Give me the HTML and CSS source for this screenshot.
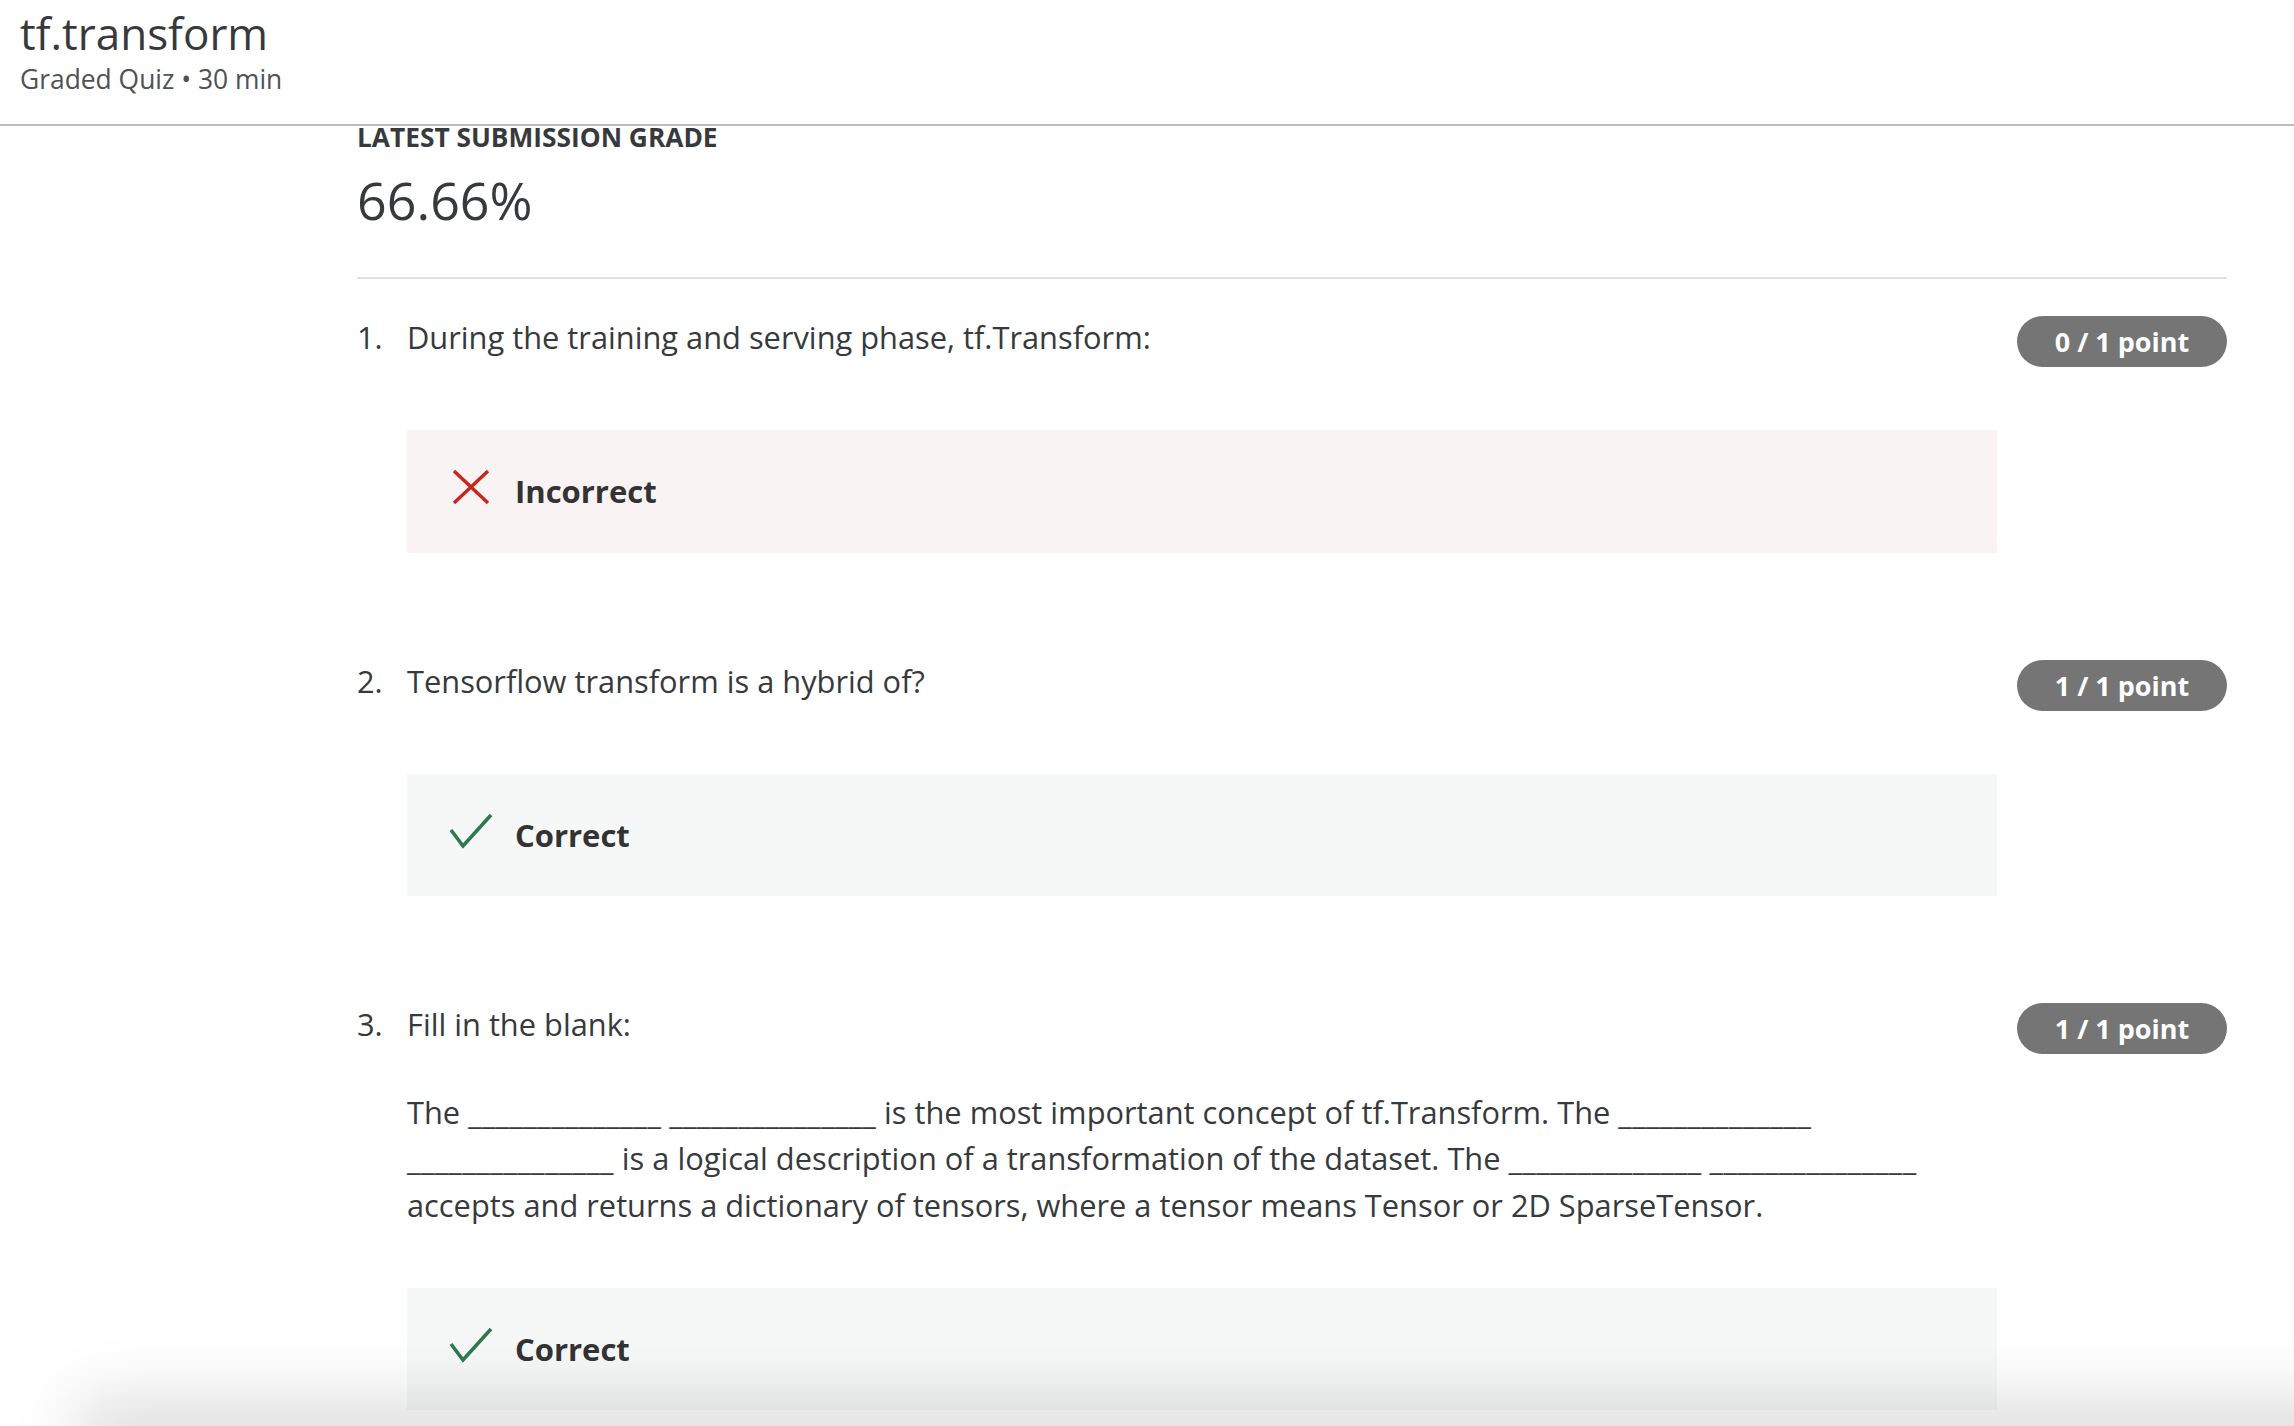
FILE: index.html
```html
<!DOCTYPE html>
<html lang="en">
<head>
<meta charset="utf-8">
<title>tf.transform</title>
<link rel="stylesheet" href="styles.css">
</head>
<body>
<header class="top">
  <h1 class="title">tf.transform</h1>
  <div class="meta">Graded Quiz • 30 min</div>
</header>
<main class="page">
  <section class="grade">
    <div class="grade-label">LATEST SUBMISSION GRADE</div>
    <div class="grade-value">66.66%</div>
  </section>
  <ol class="questions">
    <li class="question">
      <div class="q-num">1.</div>
      <div class="q-body">
        <div class="q-prompt"><p>During the training and serving phase, tf.Transform:</p></div>
        <div class="feedback feedback-incorrect">
          <svg class="fb-icon" width="44" height="36" viewBox="0 0 44 36" aria-hidden="true"><path d="M5 2 L39 34 M39 2 L5 34" fill="none" stroke="#c7261d" stroke-width="3.4"/></svg>
          <span class="fb-text">Incorrect</span>
        </div>
      </div>
      <div class="points">0 / 1 point</div>
    </li>
    <li class="question">
      <div class="q-num">2.</div>
      <div class="q-body">
        <div class="q-prompt"><p>Tensorflow transform is a hybrid of?</p></div>
        <div class="feedback feedback-correct">
          <svg class="fb-icon" width="44" height="36" viewBox="0 0 44 36" aria-hidden="true"><path d="M2 17 L14 33 L42 2" fill="none" stroke="#2d7a4f" stroke-width="3.6"/></svg>
          <span class="fb-text">Correct</span>
        </div>
      </div>
      <div class="points">1 / 1 point</div>
    </li>
    <li class="question">
      <div class="q-num">3.</div>
      <div class="q-body">
        <div class="q-prompt">
          <p>Fill in the blank:</p>
          <p>The <span class="blank">______________</span> <span class="blank">_______________</span> is the most important concept of tf.Transform. The <span class="blank">______________</span> <span class="blank">_______________</span> is a logical description of a transformation of the dataset. The <span class="blank">______________</span> <span class="blank">_______________</span> accepts and returns a dictionary of tensors, where a tensor means Tensor or 2D SparseTensor.</p>
        </div>
        <div class="feedback feedback-correct">
          <svg class="fb-icon" width="44" height="36" viewBox="0 0 44 36" aria-hidden="true"><path d="M2 17 L14 33 L42 2" fill="none" stroke="#2d7a4f" stroke-width="3.6"/></svg>
          <span class="fb-text">Correct</span>
        </div>
      </div>
      <div class="points">1 / 1 point</div>
    </li>
  </ol>
</main>
<div class="dock-shadow"></div>
</body>
</html>
```
FILE: styles.css
```css
html, body {
  margin: 0;
  padding: 0;
  background: #ffffff;
}

body {
  font-family: "Open Sans", "Noto Sans", sans-serif;
  color: #373a3c;
}

.top {
  padding: 6px 20px 25px;
  border-bottom: 2px solid #bdbdbd;
}

.title {
  margin: 0;
  font-size: 44px;
  line-height: 54px;
  font-weight: 400;
  color: #373a3c;
}

.meta {
  font-size: 26.4px;
  line-height: 39px;
  color: #4f5254;
}

.page {
  padding: 0 67px 0 357px;
}

.grade {
  padding-top: 1px;
  padding-bottom: 46px;
  border-bottom: 2px solid #e1e1e1;
}

.grade-label {
  font-size: 26.3px;
  font-weight: 700;
  line-height: 21px;
}

.grade-value {
  margin-top: 21px;
  font-size: 52px;
  line-height: 62px;
}

.questions {
  list-style: none;
  margin: 35px 0 0;
  padding: 0;
}

.question {
  display: flex;
  align-items: flex-start;
  margin-bottom: 105px;
  font-size: 30.8px;
  line-height: 46.5px;
}

.q-num {
  flex: none;
  width: 50px;
}

.q-body {
  flex: 1;
  min-width: 0;
}

.q-prompt {
  min-height: 55px;
}

.q-prompt p {
  margin: 0;
}

.q-prompt p + p {
  margin-top: 41px;
  line-height: 46.7px;
}

.blank {
  letter-spacing: 0.3px;
}

.points {
  flex: none;
  margin-left: 20px;
  margin-top: 2px;
  width: 210px;
  height: 51px;
  border-radius: 26px;
  background: #757575;
  color: #ffffff;
  font-weight: 700;
  font-size: 27px;
  line-height: 51px;
  text-align: center;
}

.feedback {
  margin-top: 61px;
  display: flex;
  align-items: center;
  padding: 38px 42px;
}

.question:last-child .feedback {
  margin-top: 59px;
}

.feedback-incorrect {
  background: #f9f3f3;
}

.feedback-correct {
  background: #f6f8f7;
}

.fb-icon {
  flex: none;
  display: block;
  margin-bottom: 8px;
}

.fb-text {
  margin-left: 22px;
  font-weight: 700;
  font-size: 31px;
  color: #333333;
}

.dock-shadow {
  position: fixed;
  left: 70px;
  right: -100px;
  bottom: -45px;
  height: 76px;
  background: rgba(0, 0, 0, 0.12);
  filter: blur(30px);
  border-radius: 40px;
  pointer-events: none;
}
```
